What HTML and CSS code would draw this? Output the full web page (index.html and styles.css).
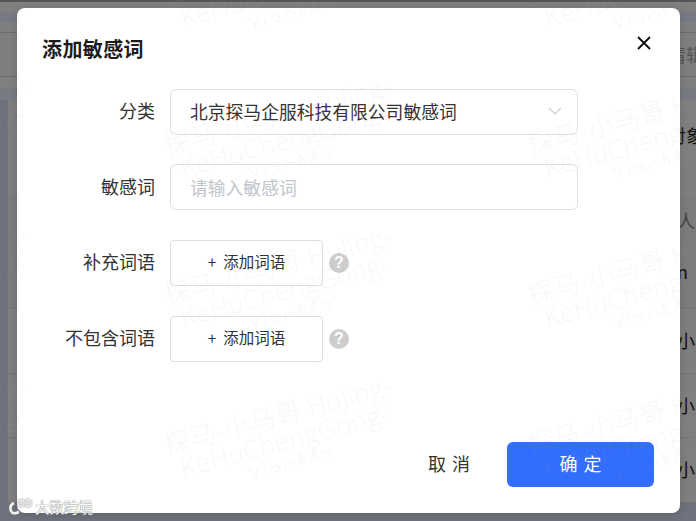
FILE: index.html
```html
<!DOCTYPE html>
<html lang="zh-CN">
<head>
    <meta charset="UTF-8">
    <title>添加敏感词</title>
    <link rel="stylesheet" href="styles.css">
</head>
<body>

    <div class="page">
        <div class="page-top"></div>
        <div class="band band-top"></div>
        <div class="tool-row">清辑</div>
        <div class="band band-head"></div>
        <div class="table">
            <div class="table-row row-first">对象</div>
            <div class="table-row row-second">人</div>
            <div class="table-row row-name">n</div>
            <div class="table-row">小小</div>
            <div class="table-row">小小</div>
            <div class="table-row">小小</div>
        </div>
    </div>

    <div class="mask">
        <div class="modal">
            <div class="modal-header">
                <h2>添加敏感词</h2>
                <svg class="close" width="14" height="14" viewBox="0 0 14 14">
                    <path d="M1 1 L13 13 M13 1 L1 13" stroke="#111" stroke-width="1.9" fill="none"/>
                </svg>
            </div>

            <form class="modal-form">
                <div class="form-row">
                    <label>分类</label>
                    <div class="select">
                        <span>北京探马企服科技有限公司敏感词</span>
                        <svg width="14" height="8" viewBox="0 0 14 8">
                            <path d="M1 1 L7 7 L13 1" stroke="#c8cbd0" stroke-width="1.2" fill="none"/>
                        </svg>
                    </div>
                </div>
                <div class="form-row">
                    <label for="word">敏感词</label>
                    <input type="text" id="word" placeholder="请输入敏感词">
                </div>
                <div class="form-row">
                    <label>补充词语</label>
                    <button type="button" class="add-btn"><span class="plus">+</span>添加词语</button>
                    <span class="help">?</span>
                </div>
                <div class="form-row">
                    <label>不包含词语</label>
                    <button type="button" class="add-btn"><span class="plus">+</span>添加词语</button>
                    <span class="help">?</span>
                </div>
            </form>

            <div class="modal-footer">
                <button type="button" class="cancel">取 消</button>
                <button type="button" class="confirm">确 定</button>
            </div>
        </div>
    </div>

    <div class="watermark">
        <div class="wm-grid">
            <div class="wm-cell"><div class="wm-text">探马-小马哥 HuJing-<br>KeHuChengGong-<br>XiaoMa</div></div>
            <div class="wm-cell"><div class="wm-text">探马-小马哥 HuJing-<br>KeHuChengGong-<br>XiaoMa</div></div>
            <div class="wm-cell"><div class="wm-text">探马-小马哥 HuJing-<br>KeHuChengGong-<br>XiaoMa</div></div>
            <div class="wm-cell"><div class="wm-text">探马-小马哥 HuJing-<br>KeHuChengGong-<br>XiaoMa</div></div>
            <div class="wm-cell"><div class="wm-text">探马-小马哥 HuJing-<br>KeHuChengGong-<br>XiaoMa</div></div>
            <div class="wm-cell"><div class="wm-text">探马-小马哥 HuJing-<br>KeHuChengGong-<br>XiaoMa</div></div>
            <div class="wm-cell"><div class="wm-text">探马-小马哥 HuJing-<br>KeHuChengGong-<br>XiaoMa</div></div>
            <div class="wm-cell"><div class="wm-text">探马-小马哥 HuJing-<br>KeHuChengGong-<br>XiaoMa</div></div>
            <div class="wm-cell"><div class="wm-text">探马-小马哥 HuJing-<br>KeHuChengGong-<br>XiaoMa</div></div>
            <div class="wm-cell"><div class="wm-text">探马-小马哥 HuJing-<br>KeHuChengGong-<br>XiaoMa</div></div>
            <div class="wm-cell"><div class="wm-text">探马-小马哥 HuJing-<br>KeHuChengGong-<br>XiaoMa</div></div>
            <div class="wm-cell"><div class="wm-text">探马-小马哥 HuJing-<br>KeHuChengGong-<br>XiaoMa</div></div>
        </div>
    </div>

    <div class="brand">
        <svg class="brand-logo" width="26" height="18" viewBox="0 0 26 18">
            <path d="M6 5 Q1 7 3 13 Q5 17 11 14" stroke="#f2f2f2" stroke-width="2.6" fill="none"/>
            <circle cx="13" cy="5" r="3" stroke="#eee" stroke-width="1.3" fill="none"/>
            <circle cx="20" cy="5" r="3" stroke="#eee" stroke-width="1.3" fill="none"/>
        </svg>
        <span>大数跨境</span>
    </div>

</body>
</html>
```

FILE: styles.css
```css
* {
    margin: 0px;
    padding: 0px;
    box-sizing: border-box;
}

html, body {
    height: 100%;
    overflow: hidden;
}

body {
    font-family: "Noto Sans CJK SC", "Liberation Sans", sans-serif;
    background: #7f7f7f;
    color: #333;
}

/* page behind the mask, only the edges show */
.page {
    height: 100%;
    display: flex;
    flex-direction: column;
    color: #111;
    font-size: 18px;
}

.page-top {
    height: 12px;
    border-top: 2px solid #555;
}

.band {
    background: #777a82;
}

.band-top {
    height: 10px;
}

.tool-row {
    height: 45px;
    margin: 10px 0 11px 0;
    padding-left: 668px;
    line-height: 43px;
    color: #555;
    white-space: nowrap;
    border-top: 1px solid #6e6e6e;
    border-bottom: 1px solid #6e6e6e;
}

.band-head {
    height: 12px;
}

.table {
    flex: 1;
    padding-left: 8px;
    background: #6d727d;
}

.table-row {
    height: 64.5px;
    padding-left: 669px;
    line-height: 62px;
    white-space: nowrap;
    border-bottom: 1px solid #747474;
    background: #7f7f7f;
}

.row-first {
    height: 95px;
    padding-left: 660px;
    padding-top: 3px;
    line-height: 64px;
    border-bottom: none;
}

.row-second {
    height: 44px;
    line-height: 50px;
    color: #444;
    border-bottom: none;
    background: #7c7c7c;
}

.row-name {
    height: 70px;
    line-height: 64px;
    background: #7c7c7c;
}

.mask {
    position: absolute;
    top: 0;
    left: 0;
    right: 0;
    bottom: 0;
    padding: 8px 16px 8px 17px;
}

.modal {
    display: flex;
    flex-direction: column;
    height: 100%;
    background: #fff;
    border-radius: 8px;
    box-shadow: 0px 2px 8px rgba(0, 0, 0, 0.15);
}

.modal-header {
    display: flex;
    justify-content: space-between;
    align-items: flex-start;
    padding: 26px 29px 0 25px;
}

.modal-header h2 {
    font-size: 20px;
    line-height: 29px;
    letter-spacing: 0.4px;
    color: #1c1c1c;
}

.close {
    margin-top: 2px;
}

.modal-form {
    display: flex;
    flex-direction: column;
    gap: 30px;
    padding-top: 26px;
    flex: 1;
}

.form-row {
    display: flex;
    align-items: center;
    height: 46px;
}

.form-row:first-child {
    height: 45px;
}

.form-row label {
    width: 153px;
    padding: 0 15px 3px 0;
    text-align: right;
    font-size: 18px;
    color: #333;
}

.form-row:nth-child(n+3) label {
    padding-bottom: 5px;
}

.select, input[type="text"] {
    width: 408px;
    height: 46px;
    padding: 0 15px 1px 19px;
    border: 1px solid #dcdfe6;
    border-radius: 6px;
    font-family: inherit;
    font-size: 17.8px;
    color: #333;
}

.select {
    display: flex;
    justify-content: space-between;
    align-items: center;
}

input[type="text"]::placeholder {
    color: #c0c4cc;
}

.add-btn {
    width: 153px;
    height: 46px;
    padding-bottom: 4px;
    background: #fff;
    border: 1px solid #dcdfe6;
    border-radius: 4px;
    font-family: inherit;
    font-size: 15.5px;
    color: #333;
}

.plus {
    margin-right: 7px;
}

.help {
    width: 20px;
    height: 20px;
    margin-left: 6px;
    border-radius: 50%;
    background: #cdcdcd;
    color: #fff;
    font-family: "Liberation Sans", sans-serif;
    font-size: 16px;
    font-weight: bold;
    line-height: 20px;
    text-align: center;
}

.modal-footer {
    display: flex;
    justify-content: flex-end;
    align-items: center;
    gap: 37px;
    padding: 0 26px 26px 0;
}

.modal-footer button {
    border: none;
    padding-bottom: 3px;
    font-family: inherit;
    font-size: 18px;
    word-spacing: 2px;
}

.cancel {
    background: none;
    color: #333;
}

.confirm {
    width: 147px;
    height: 45px;
    background: #316efc;
    color: #fff;
    border-radius: 6px;
}

/* tiled watermark over the whole window */
.watermark {
    position: absolute;
    top: 0;
    left: 0;
    right: 0;
    bottom: 0;
    overflow: hidden;
    pointer-events: none;
}

.wm-grid {
    display: grid;
    grid-template-columns: repeat(3, 364px);
    grid-auto-rows: 150px;
    margin: -115px 0 0 -201px;
}

.wm-text {
    width: 240px;
    height: 68px;
    margin-top: 66px;
    overflow: hidden;
    transform: rotate(-15deg);
    font-family: "Open Sans", "Noto Sans CJK SC", sans-serif;
    font-size: 26px;
    font-weight: 300;
    line-height: 26px;
    letter-spacing: 0.4px;
    text-align: center;
    white-space: nowrap;
    color: rgba(170, 170, 170, 0.1);
}

.brand {
    position: absolute;
    left: 8px;
    top: 496px;
    display: flex;
    align-items: center;
    gap: 1px;
    font-size: 14.5px;
    color: #fff;
    text-shadow: 0 0 1px #777, 0 0 1px #777;
}

.brand-logo {
    filter: drop-shadow(0 0 1px #777);
}
```
